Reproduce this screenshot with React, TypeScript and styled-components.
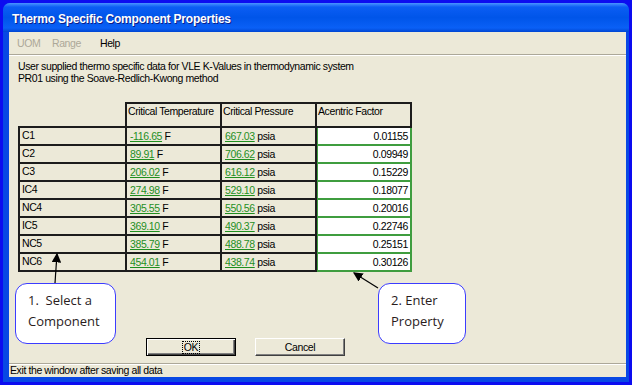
import React from 'react';
import styled, { createGlobalStyle } from 'styled-components';

const GlobalStyle = createGlobalStyle`
  html, body {
    margin: 0;
    padding: 0;
  }
  body {
    font-family: 'Liberation Sans', Arial, sans-serif;
    font-size: 10.5px;
    letter-spacing: -0.4px;
    color: #000;
  }
`;

const Screen = styled.div`
  width: 632px;
  height: 385px;
  box-sizing: border-box;
  padding: 3px;
  background: #0c0cf0;
  display: flex;
`;

const Window = styled.div`
  flex: 1;
  display: flex;
  flex-direction: column;
  border-radius: 7px 7px 0 0;
  overflow: hidden;
  background: #0848e4;
`;

const TitleBar = styled.div`
  height: 29px;
  flex: none;
  box-sizing: border-box;
  display: flex;
  align-items: center;
  padding: 3px 0 0 9px;
  background: linear-gradient(to bottom, #4a94ff 0%, #0b5df4 14%, #0055e9 50%, #0a60f6 86%, #0046d2 100%);
  color: #fff;
  font-weight: bold;
  font-size: 12px;
  letter-spacing: -0.2px;
  text-shadow: 1px 1px 0 #0a1e8a;
`;

const Frame = styled.div`
  flex: 1;
  display: flex;
  padding: 0 3px 5px 6px;
`;

const Client = styled.div`
  flex: 1;
  position: relative;
  display: flex;
  flex-direction: column;
  background: #ece9d8;
`;

const MenuBar = styled.div`
  height: 22px;
  display: flex;
  align-items: center;
  padding-left: 8px;
  border-bottom: 1px solid #aca899;
  box-shadow: 0 1px 0 #fff;
`;

const MenuItem = styled.span<{ $disabled?: boolean; $w: number }>`
  width: ${p => p.$w}px;
  color: ${p => (p.$disabled ? '#aca899' : '#000')};
`;

const Intro = styled.p`
  margin: 6px 0 0 9px;
  line-height: 11.5px;
`;

const Grid = styled.div`
  display: grid;
  grid-template-columns: 109px 95px 95px 95px;
  grid-template-rows: 26px repeat(8, 18px);
  margin: 18px 0 0 9px;
  width: max-content;
`;

const Corner = styled.div`
  border-right: 2px solid #1c1c1c;
  border-bottom: 2px solid #1c1c1c;
`;

const HeadCell = styled.div`
  box-sizing: border-box;
  padding: 1px 0 0 1px;
  border-top: 2px solid #1c1c1c;
  border-right: 2px solid #1c1c1c;
  border-bottom: 2px solid #1c1c1c;
  white-space: nowrap;
`;

const LabelCell = styled.div`
  box-sizing: border-box;
  padding: 1px 0 0 2px;
  border-left: 2px solid #1c1c1c;
  border-right: 2px solid #1c1c1c;
  border-bottom: 2px solid #1c1c1c;
`;

const ValueCell = styled.div`
  box-sizing: border-box;
  padding: 2px 0 0 3px;
  border-right: 2px solid #1c1c1c;
  border-bottom: 2px solid #1c1c1c;
  white-space: nowrap;
`;

const FactorCell = styled.div`
  box-sizing: border-box;
  padding: 2px 2px 0 0;
  background: #fff;
  text-align: right;
  border-right: 2px solid #3f9d3f;
  border-bottom: 2px solid #3f9d3f;
  box-shadow: inset 1px 0 0 #3f9d3f;
`;

const Link = styled.span`
  color: #1f8f1f;
  text-decoration: underline;
`;

const ButtonRow = styled.div`
  display: flex;
  gap: 19px;
  margin: 66px 0 0 137px;
`;

const Button = styled.div<{ $default?: boolean }>`
  width: 90px;
  height: 18px;
  box-sizing: border-box;
  display: flex;
  align-items: center;
  justify-content: center;
  background: #ece9d8;
  border: 1px solid;
  border-color: ${p => (p.$default ? '#000' : '#fff #404040 #404040 #fff')};
  box-shadow: ${p =>
    p.$default
      ? 'inset 1px 1px 0 #fff, inset -1px -1px 0 #404040, inset -2px -2px 0 #808080'
      : 'inset -1px -1px 0 #808080'};
`;

const Focus = styled.span`
  padding: 0 1px;
  outline: 1px dotted #000;
  line-height: 11px;
`;

const StatusBar = styled.div`
  margin-top: auto;
  height: 13px;
  padding-left: 1px;
  border-top: 1px solid #aca899;
  box-shadow: inset 0 1px 0 #fff;
  line-height: 13px;
`;

const Callout = styled.div<{ $x: number; $w: number }>`
  position: absolute;
  left: ${p => p.$x}px;
  top: 251px;
  width: ${p => p.$w}px;
  height: 61px;
  box-sizing: border-box;
  padding: 6px 0 0 12px;
  background: #fff;
  border: 1.5px solid #3c3cff;
  border-radius: 12px;
  font-family: 'Open Sans', 'Liberation Sans', sans-serif;
  font-size: 13px;
  letter-spacing: 0;
  line-height: 21px;
  color: #2a1c1c;
`;

const Arrows = styled.svg`
  position: absolute;
  left: 0;
  top: 0;
  pointer-events: none;
`;

const rows = [
  ['C1', '-116.65', '667.03', '0.01155'],
  ['C2', '89.91', '706.62', '0.09949'],
  ['C3', '206.02', '616.12', '0.15229'],
  ['IC4', '274.98', '529.10', '0.18077'],
  ['NC4', '305.55', '550.56', '0.20016'],
  ['IC5', '369.10', '490.37', '0.22746'],
  ['NC5', '385.79', '488.78', '0.25151'],
  ['NC6', '454.01', '438.74', '0.30126'],
];

const App: React.FC = () => {
  return (
    <>
      <GlobalStyle />
      <Screen>
        <Window>
          <TitleBar>Thermo Specific Component Properties</TitleBar>
          <Frame>
            <Client>
              <MenuBar>
                <MenuItem $disabled $w={35}>UOM</MenuItem>
                <MenuItem $disabled $w={48}>Range</MenuItem>
                <MenuItem $w={40}>Help</MenuItem>
              </MenuBar>
              <Intro>
                User supplied thermo specific data for VLE K-Values in thermodynamic system
                <br />
                PR01 using the Soave-Redlich-Kwong method
              </Intro>
              <Grid>
                <Corner />
                <HeadCell>Critical Temperature</HeadCell>
                <HeadCell>Critical Pressure</HeadCell>
                <HeadCell>Acentric Factor</HeadCell>
                {rows.map(([name, temp, pres, factor]) => (
                  <React.Fragment key={name}>
                    <LabelCell>{name}</LabelCell>
                    <ValueCell>
                      <Link>{temp}</Link> F
                    </ValueCell>
                    <ValueCell>
                      <Link>{pres}</Link> psia
                    </ValueCell>
                    <FactorCell>{factor}</FactorCell>
                  </React.Fragment>
                ))}
              </Grid>
              <ButtonRow>
                <Button $default>
                  <Focus>OK</Focus>
                </Button>
                <Button>Cancel</Button>
              </ButtonRow>
              <StatusBar>Exit the window after saving all data</StatusBar>

              <Arrows width="617" height="345">
                <defs>
                  <marker id="head" markerWidth="8" markerHeight="8" refX="7" refY="4" orient="auto">
                    <path d="M0,0 L8,4 L0,8 Z" fill="#000" />
                  </marker>
                </defs>
                <line x1="46" y1="251" x2="48" y2="222" stroke="#000" strokeWidth="1.2" markerEnd="url(#head)" />
                <line x1="369" y1="256" x2="345" y2="241" stroke="#000" strokeWidth="1.2" markerEnd="url(#head)" />
              </Arrows>
              <Callout $x={6} $w={101}>
                1.&nbsp; Select a
                <br />
                Component
              </Callout>
              <Callout $x={369} $w={88}>
                2. Enter
                <br />
                Property
              </Callout>
            </Client>
          </Frame>
        </Window>
      </Screen>
    </>
  );
};

export default App;
